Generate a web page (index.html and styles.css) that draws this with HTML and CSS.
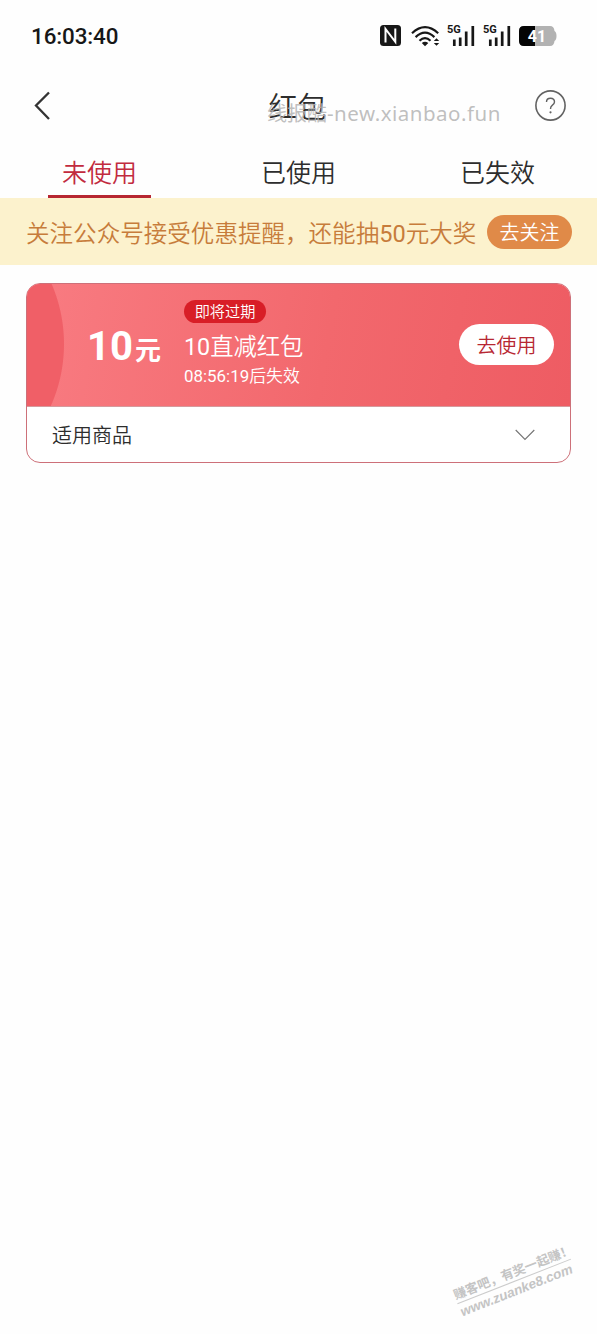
FILE: index.html
```html
<!DOCTYPE html>
<html lang="zh-CN">
<head>
<meta charset="utf-8">
<title>红包</title>
<link rel="stylesheet" href="styles.css">
</head>
<body>
<div class="status">
  <span class="clock">16:03:40</span>
  <div class="status-icons">
    <svg class="nfc" width="21" height="21" viewBox="0 0 21 21"><rect width="21" height="21" rx="3.5" fill="#171717"/><path d="M5.500 17.500V4L15.300 16.800V3.500" fill="none" stroke="#fff" stroke-width="2"/></svg>
    <svg class="wifi" width="29" height="22" viewBox="0 0 29 22"><g fill="none" stroke="#171717" stroke-width="2.2"><path d="M1 8.2Q14 -3.8 27.2 8.2"/><path d="M4.600 12.1Q14 3.2 23.4 12.1"/><path d="M8.500 15.8Q14 10.500 19.5 15.8"/></g><path d="M10.8 18Q14 15.600 17.3 18L14 21.200ZM22.8 15.9h5.4L25.5 13.200ZM22.8 18.1h5.4L25.5 20.8Z" fill="#171717"/></svg>
    <svg class="signal" width="28" height="23" viewBox="0 0 28 23"><text x="0" y="9" class="net">5G</text><path d="M7.300 22V15.500M13.200 22V13.500M19.2 22V7.500M25.800 22V2" stroke="#171717" stroke-width="2.700" stroke-linecap="butt"/></svg>
    <svg class="signal" width="28" height="23" viewBox="0 0 28 23"><text x="0" y="9" class="net">5G</text><path d="M7.300 22V15.500M13.200 22V13.500M19.2 22V7.500M25.800 22V2" stroke="#171717" stroke-width="2.700" stroke-linecap="butt"/></svg>
    <svg class="battery" width="38" height="20" viewBox="0 0 38 20"><path d="M5 0H31Q35 0 35.5 5Q37.5 6 37.5 10T35.5 15Q35 20 31 20H5Q0 20 0 15V5Q0 0 5 0Z" fill="#b2b2b2"/><path d="M16 0H5Q0 0 0 5V15Q0 20 5 20H16Z" fill="#050505"/><text x="18" y="15.5" text-anchor="middle" class="level">41</text></svg>
  </div>
</div>
<header class="header">
  <svg class="back" width="18" height="30" viewBox="0 0 18 30"><path d="M16 1.500 3 14.500 16 28" fill="none" stroke="#333" stroke-width="2.300"/></svg>
  <h1 class="title">红包</h1>
  <svg class="help" width="32" height="32" viewBox="0 0 32 32"><circle cx="15.500" cy="15.500" r="14.600" fill="none" stroke="#626262" stroke-width="1.600"/><path d="M11.500 12Q11.500 8.300 15.500 8.300T19.500 12.100Q19.500 13.800 17.200 15.300 15.500 16.400 15.500 19" fill="none" stroke="#626262" stroke-width="1.400"/><circle cx="15.500" cy="22.300" r="1.100" fill="#626262"/></svg>
  <span class="site-mark">线报酷<span class="site-url">-new.xianbao.fun</span></span>
</header>
<nav class="tabs">
  <div class="tab active">未使用</div>
  <div class="tab">已使用</div>
  <div class="tab">已失效</div>
</nav>
<div class="banner">
  <span class="notice">关注公众号接受优惠提醒，还能抽<span class="digits">50</span>元大奖</span>
  <span class="follow">去关注</span>
</div>
<main class="coupon">
  <div class="coupon-top">
    <div class="amount">10<span class="unit">元</span></div>
    <div class="details">
      <span class="badge">即将过期</span>
      <span class="name"><span class="digits">10</span>直减红包</span>
      <span class="expiry"><span class="digits">08:56:19</span>后失效</span>
    </div>
    <span class="use">去使用</span>
  </div>
  <div class="coupon-bottom">
    <span>适用商品</span>
    <svg width="20" height="12" viewBox="0 0 20 12"><path d="M.7 1 10 10.300 19.300 1" fill="none" stroke="#777" stroke-width="1.200"/></svg>
  </div>
</main>
<div class="stamp">
  <div class="stamp-name">赚客吧，有奖一起赚！</div>
  <div class="stamp-url">www.zuanke8.com</div>
</div>
</body>
</html>
```
FILE: styles.css
```css
* { box-sizing: border-box; }
body {
  margin: 0;
  height: 1334px;
  overflow: hidden;
  position: relative;
  background: #fefefe;
  color: #2d2d2d;
  font-family: Roboto, "Noto Sans CJK SC", sans-serif;
  font-weight: 350;
}
svg { display: block; flex: none; }
.digits { font-weight: 400; }
.status {
  height: 71px;
  padding: 0 40px 0 31px;
  display: flex;
  align-items: center;
  justify-content: space-between;
}
.clock { font-size: 22.4px; font-weight: 500; color: #171717; letter-spacing: -.1px; }
.status-icons { display: flex; align-items: center; }
.wifi { margin-left: 10px; }
.signal { margin-left: 8px; }
.wifi + .signal { margin-left: 7px; }
.battery { margin-left: 8px; }
.net { font: 700 11px Roboto, sans-serif; fill: #171717; }
.level { font: 700 16px Roboto, sans-serif; fill: #fff; }
.header {
  position: relative;
  height: 69px;
  padding: 0 30px 0 33px;
  display: flex;
  align-items: center;
  justify-content: space-between;
}
.title { margin: 0; padding: 4px 0 0 9px; font-size: 29px; line-height: 40px; font-weight: 350; }
.site-mark {
  position: absolute;
  left: 267px;
  top: 27px;
  font-size: 20px;
  line-height: 30px;
  font-weight: 400;
  color: rgba(180, 180, 180, .85);
  white-space: nowrap;
}
.site-url { font-family: "Noto Sans", sans-serif; font-size: 20.5px; letter-spacing: .5px; }
.tabs { height: 58px; display: grid; grid-template-columns: repeat(3, 1fr); }
.tab {
  width: 103px;
  height: 58px;
  justify-self: center;
  text-align: center;
  font-size: 25px;
  line-height: 68px;
}
.active { color: #c22b3e; border-bottom: 3px solid #b72732; }
.banner {
  height: 67px;
  padding: 0 25px 0 26px;
  display: flex;
  align-items: center;
  justify-content: space-between;
  background: #fcf2cd;
}
.notice { color: #c77c3b; font-size: 23.550px; white-space: nowrap; }
.follow {
  width: 85px;
  height: 34px;
  border-radius: 17px;
  background: #e08a48;
  color: #fff;
  font-size: 20px;
  line-height: 37px;
  text-align: center;
}
.coupon {
  margin: 18px 26px 0;
  height: 180px;
  border: 1px solid #cd7079;
  border-radius: 14px;
  overflow: hidden;
  background: #fff;
}
.coupon-top {
  height: 123px;
  padding: 0 16px 2px 60px;
  display: flex;
  align-items: center;
  color: #fff;
  border-bottom: 1px solid #d59a9d;
  background:
    radial-gradient(circle 152px at -115px 60px, #f05f67 151.500px, transparent 152.500px),
    linear-gradient(100deg, #f87a80 5%, #f2686d 55%, #ee5c63);
}
.amount { width: 97px; padding-top: 9px; font-size: 40px; font-weight: 700; line-height: 48px; white-space: nowrap; }
.unit { font-size: 26px; margin-left: 2px; }
.details { flex: 1; display: flex; flex-direction: column; align-items: flex-start; }
.badge {
  width: 82px;
  height: 23px;
  border-radius: 12px;
  background: #d81e27;
  font-size: 15.200px;
  line-height: 24px;
  text-align: center;
}
.name { margin-top: 7px; font-size: 23.300px; line-height: 34px; }
.expiry { font-size: 16.900px; line-height: 24px; }
.use {
  width: 95px;
  height: 41px;
  border-radius: 21px;
  background: #fff;
  color: #b72732;
  font-size: 20px;
  line-height: 44px;
  text-align: center;
}
.coupon-bottom {
  height: 55px;
  padding: 0 35px 0 25px;
  display: flex;
  align-items: center;
  justify-content: space-between;
  font-size: 20px;
}
.stamp {
  position: absolute;
  left: 453px;
  top: 1263px;
  width: 122px;
  transform: rotate(-21.500deg);
  color: #c4c4c4;
  white-space: nowrap;
}
.stamp-name { font: 700 12.700px/18px "Noto Sans CJK SC", sans-serif; border-bottom: 1px solid #ccc; }
.stamp-url { font: italic 700 13.500px/17px "Liberation Sans", sans-serif; }
```
